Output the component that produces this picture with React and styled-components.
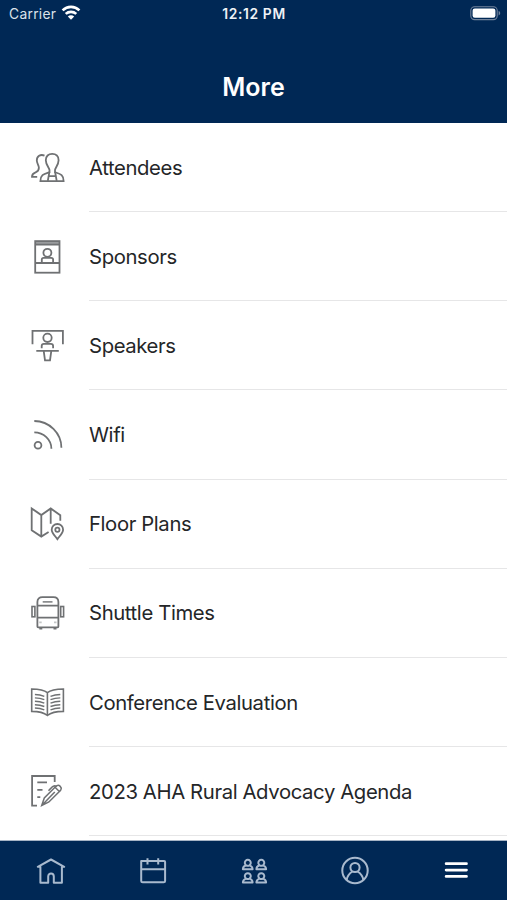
import React from "react";
import styled, { createGlobalStyle } from "styled-components";

const items = [
  { label: "Attendees", icon: attendees },
  { label: "Sponsors", icon: sponsors },
  { label: "Speakers", icon: speakers },
  { label: "Wifi", icon: wifi },
  { label: "Floor Plans", icon: floorPlans },
  { label: "Shuttle Times", icon: shuttle },
  { label: "Conference Evaluation", icon: book },
  { label: "2023 AHA Rural Advocacy Agenda", icon: agenda },
];

const tabs = [
  { name: "home", icon: home },
  { name: "schedule", icon: calendar },
  { name: "people", icon: people },
  { name: "profile", icon: profile },
  { name: "more", icon: menu, active: true },
];

const App = () => (
  <Screen>
    <GlobalStyle />
    <Header>
      <StatusBar>
        <Carrier>
          Carrier
          {signal()}
        </Carrier>
        <Time>12:12 PM</Time>
        <Battery>{battery()}</Battery>
      </StatusBar>
      <Title>More</Title>
    </Header>
    <List>
      {items.map(({ label, icon }) => (
        <Row key={label}>
          <RowIcon viewBox="0 0 36 36">{icon()}</RowIcon>
          <RowLabel>{label}</RowLabel>
        </Row>
      ))}
    </List>
    <TabBar>
      {tabs.map(({ name, icon, active }) => (
        <Tab key={name} $active={active}>
          <TabIcon viewBox="0 0 32 32">{icon()}</TabIcon>
        </Tab>
      ))}
    </TabBar>
  </Screen>
);

export default App;

function signal() {
  return (
    <svg width="20" height="16" viewBox="0 0 20 16" fill="none" stroke="#fff">
      <path d="M1.6 5.4C6.4.8 13.6.8 18.4 5.4" strokeWidth="2.7" />
      <path d="M4.7 8.9C7.7 6.2 12.3 6.2 15.3 8.9" strokeWidth="2.6" />
      <path d="M10 14.8 6.8 11.5C8.6 9.9 11.4 9.9 13.2 11.5Z" fill="#fff" stroke="none" />
    </svg>
  );
}

function battery() {
  return (
    <svg width="31" height="15" viewBox="0 0 31 15">
      <rect x=".8" y=".8" width="26.4" height="12.8" rx="3.8" fill="none" stroke="#71839c" strokeWidth="1.1" />
      <rect x="2.6" y="2.6" width="22.8" height="9.2" rx="2.2" fill="#fff" />
      <path d="M28.6 5v4.4c1-.4 1.6-1.2 1.6-2.2S29.6 5.4 28.6 5Z" fill="#71839c" />
    </svg>
  );
}

function attendees() {
  return (
    <>
      <path d="M15.5 5.6C11.4 3.8 7.7 6.4 7.8 10.6C7.9 13.6 9.9 15 9.9 17.8C9.9 20.4 8.8 21.6 6.6 22.4C4 23.4 3 24.4 3 26.8H8.2" />
      <path d="M20.5 23V20.2C20.5 18 16.8 14.8 16.8 10.2C16.8 6.2 19.4 3.8 23.2 3.8S29.6 6.2 29.6 10.2C29.6 14.8 26 18 26 20.2V23" />
      <path d="M20.5 22.2C15 24 11.4 24.6 11.4 31.1H34.6C34.6 24.6 31.5 24 26 22.2" />
      <path d="M20.3 22.5 18.8 30.8M26.2 22.5 27.7 30.8M20 26.2H26.6" />
    </>
  );
}

function sponsors() {
  return (
    <>
      <path d="M6.2 3.8H30.5" strokeWidth="3" stroke="#999b9d" />
      <rect x="6.2" y="2.1" width="24.3" height="31.6" />
      <path d="M6.2 5.6H30.5M6.2 24H30.5" />
      <circle cx="18.4" cy="13.8" r="4" />
      <path d="M12.8 24V20.6Q12.8 18.8 14.6 18.8H22.2Q24.1 18.8 24.1 20.6V24" />
    </>
  );
}

function speakers() {
  return (
    <>
      <path d="M3.5 16.3V2.9H33.9V16.3" />
      <circle cx="18.5" cy="9.8" r="4.2" />
      <path d="M12.7 20.2V18Q12.7 15.8 14.9 15.8H21.9Q24.1 15.8 24.1 18V20.2M7.3 22.8H29.8M14.7 22.8 16 32.3H21L22.3 22.8" />
    </>
  );
}

function wifi() {
  return (
    <>
      <circle cx="9" cy="28.2" r="3.4" />
      <path d="M5.3 15.3C14.6 15.3 22.4 22.6 22.4 31.7M5.3 4C20.2 4 32.4 16.2 32.4 30.7" />
    </>
  );
}

function floorPlans() {
  return (
    <>
      <path d="M19.6 26.1 12.3 30.6 2.7 24.2V2.4L12.3 9.1 21.7 2.4 31.3 9.3V14.8M12.3 9.1V30.6M21.7 2.4V17.7" />
      <path d="M28.4 33.2C26 29.8 22.7 27 22.7 23.7A5.7 5.7 0 0 1 34.1 23.7C34.1 27 30.8 29.8 28.4 33.2Z" />
      <circle cx="28.4" cy="23.8" r="2.1" />
    </>
  );
}

function shuttle() {
  return (
    <>
      <path d="M8.4 31.6V7C8.4 3.8 10.4 2.2 13.4 2.2H24.4C27.4 2.2 29.4 3.8 29.4 7V31.6Q29.4 32.3 28.6 32.3H9.2Q8.4 32.3 8.4 31.6ZM8.4 10.7H29.4M8.4 22.7H29.4" />
      <path d="M13.7 6.9H23.5" strokeWidth="1.4" />
      <path d="M10.3 33.5H13.3M24.5 33.5H27.5" />
      <path d="M10.2 27.3H12.7M25 27.3H27.5" stroke="#c4c6c7" />
      <rect x="3" y="11.5" width="2.9" height="10.3" strokeWidth="1.6" />
      <rect x="31.7" y="11.5" width="2.9" height="10.3" strokeWidth="1.6" />
    </>
  );
}

function book() {
  return (
    <>
      <path d="M18.4 31.5C15 28.6 9.3 27.4 2.7 27.4V5C9.3 5 15 5.8 18.4 8.7C21.8 5.8 27.8 5 34.4 5V27.4C27.8 27.4 21.8 28.6 18.4 31.5ZM18.4 8.7V31.5" strokeWidth="1.6" />
      {[10.5, 13.9, 17.3, 20.7, 24].map((y) => (
        <path
          key={y}
          strokeWidth="1.4"
          d={`M5.9 ${y}C9.5 ${y} 12.3 ${y + 0.5} 15.3 ${y + 1.8}M31.3 ${y}C27.7 ${y} 24.7 ${y + 0.5} 21.5 ${y + 1.8}`}
        />
      ))}
    </>
  );
}

function agenda() {
  return (
    <>
      <path d="M25.7 9.1V3H3.1V32.7H8M8.3 9.4H18M8.3 16.8H13.5M8.3 24.1H11.3" />
      <g strokeWidth="1.5">
        <path d="M12.7 32.5 15.3 25 26 14.3 30.4 18.5 19.9 29 12.7 32.5ZM12.7 32.5 25.8 19" />
        <path d="M26 14.3 28 12.7C30 11.4 33.3 14.4 31.9 16.7L30.4 18.5M27.3 13.1C25 12 23.5 13.5 19.5 17.8" />
      </g>
    </>
  );
}

function home() {
  return (
    <path d="M2.8 11.8 16 4.5 29.2 11.8H26.9V27.7H18.8V21.5C18.8 17.6 13.2 17.6 13.2 21.5V27.7H5.4V11.8Z" />
  );
}

function calendar() {
  return (
    <path d="M5.2 6H28.1Q29.1 6 29.1 7V26Q29.1 27.3 27.6 27.3H6.7Q5.2 27.3 5.2 26V6ZM5.2 14.2H29.1M11.5 3.3V9.6M22.2 3.3V9.6" />
  );
}

function people() {
  return [
    [4.5, 4],
    [18, 4],
    [4.5, 17.3],
    [18, 17.3],
  ].map(([x, y]) => (
    <path
      key={`${x}-${y}`}
      transform={`translate(${x} ${y})`}
      d="M3.6 6.3A3 3 0 1 1 7 6.3C8.5 7 10 7.2 10.1 10.3H.4C.5 7.2 2 7 3.6 6.3ZM3.6 6.3Q5.3 7.3 7 6.3"
    />
  ));
}

function profile() {
  return (
    <>
      <circle cx="16" cy="15.5" r="12.7" />
      <circle cx="16" cy="12.5" r="4.6" />
      <path d="M7.6 25C8.4 20.3 10.6 18.3 13.4 16.5M18.6 16.5C21.4 18.3 23.6 20.3 24.4 25" />
    </>
  );
}

function menu() {
  return <path d="M6.1 8.7H26.5M6.1 15.1H26.5M6.1 21.4H26.5" strokeWidth="2.7" strokeLinecap="round" />;
}

const GlobalStyle = createGlobalStyle`
  * {
    box-sizing: border-box;
  }
  body {
    margin: 0;
    background: #fff;
    overflow: hidden;
  }
`;

const Screen = styled.div`
  display: flex;
  flex-direction: column;
  width: 507px;
  height: 900px;
  overflow: hidden;
  background: #fff;
  font-family: Inter, "Liberation Sans", sans-serif;
`;

const Header = styled.header`
  flex: none;
  height: 123px;
  background: #002855;
  color: #fff;
`;

const StatusBar = styled.div`
  display: grid;
  grid-template-columns: 1fr auto 1fr;
  align-items: center;
  height: 27px;
  padding: 0 6px 0 9px;
`;

const Carrier = styled.div`
  display: flex;
  align-items: center;
  gap: 5px;
  font-size: 13.8px;
  letter-spacing: 0.3px;
  color: #dbe2ea;
  svg {
    margin-top: -2px;
  }
`;

const Time = styled.div`
  margin-left: -2px;
  font-size: 13.8px;
  font-weight: 600;
  letter-spacing: 0.65px;
  color: #eef2f6;
`;

const Battery = styled.div`
  display: flex;
  justify-content: flex-end;
`;

const Title = styled.h1`
  margin: 43px 0 0;
  font-size: 25px;
  line-height: 34px;
  font-weight: 600;
  text-align: center;
`;

const List = styled.ul`
  flex: 1;
  min-height: 0;
  margin: 0;
  padding: 0;
  overflow: hidden;
  list-style: none;
`;

const Row = styled.li`
  display: flex;
  align-items: center;
  gap: 24px;
  height: 89.14px;
  padding-left: 29px;
`;

const RowIcon = styled.svg`
  flex: none;
  width: 36px;
  height: 36px;
  fill: none;
  stroke: #6f7173;
  stroke-width: 1.8;
`;

const RowLabel = styled.span`
  display: flex;
  flex: 1;
  align-items: center;
  height: 100%;
  padding-top: 0.5px;
  border-bottom: 1.5px solid #e6e6e7;
  color: #242628;
  font-size: 20.3px;
  letter-spacing: -0.38px;
  white-space: nowrap;
`;

const TabBar = styled.nav`
  display: flex;
  flex: none;
  height: 60px;
  border-top: 1px solid #a6b4c5;
  background: #002855;
`;

const Tab = styled.div`
  display: flex;
  flex: 1;
  align-items: center;
  justify-content: center;
  color: ${({ $active }) => ($active ? "#fff" : "#a9bace")};
`;

const TabIcon = styled.svg`
  width: 32px;
  height: 32px;
  fill: none;
  stroke: currentColor;
  stroke-width: 2;
  stroke-linejoin: round;
`;
